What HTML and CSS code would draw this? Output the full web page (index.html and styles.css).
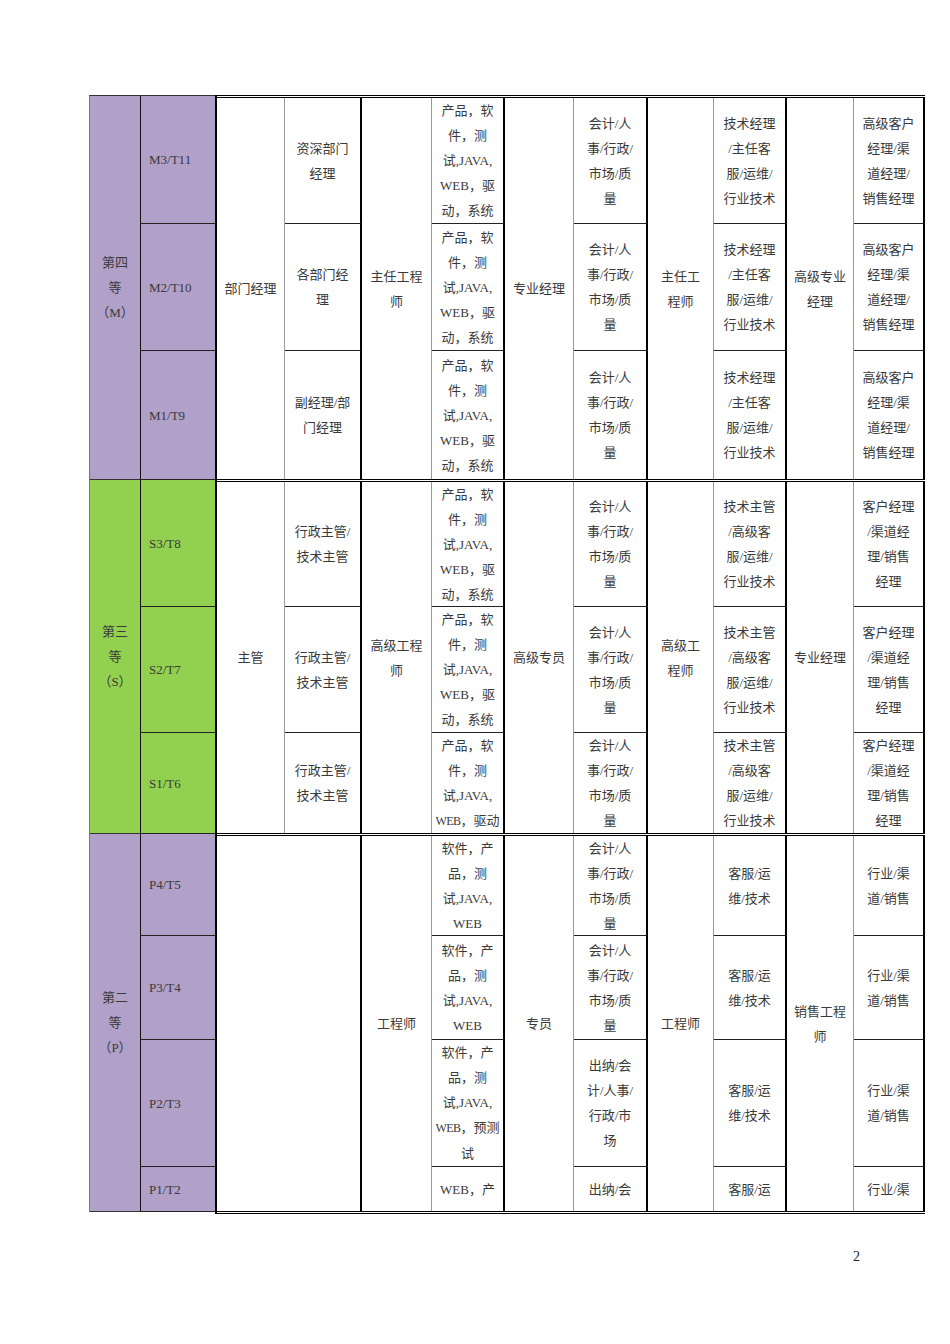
FILE: index.html
```html
<!DOCTYPE html>
<html lang="zh-CN">
<head>
<meta charset="utf-8">
<title>职级表</title>
<link rel="stylesheet" href="styles.css">
</head>
<body>
<div class="page">
  <div class="sheet">
    <div class="left">
      <div class="grade purple gm">第四<br>等<br>（M）</div>
      <div class="lvl purple">M3/T11</div>
      <div class="lvl purple">M2/T10</div>
      <div class="lvl purple">M1/T9</div>
      <div class="grade green gs">第三<br>等<br>（S）</div>
      <div class="lvl green">S3/T8</div>
      <div class="lvl green">S2/T7</div>
      <div class="lvl green">S1/T6</div>
      <div class="grade purple gp">第二<br>等<br>（P）</div>
      <div class="lvl purple">P4/T5</div>
      <div class="lvl purple">P3/T4</div>
      <div class="lvl purple">P2/T3</div>
      <div class="lvl purple">P1/T2</div>
    </div>
    <div class="right">
      <div class="sec sec-m">
        <div class="c span rs3">部门经理</div>
        <div class="c sub">资深部门<br>经理</div>
        <div class="c span rs3">主任工程<br>师</div>
        <div class="c sub">产品，软<br>件，测<br>试,JAVA,<br>WEB，驱<br>动，系统</div>
        <div class="c span rs3">专业经理</div>
        <div class="c sub">会计/人<br>事/行政/<br>市场/质<br>量</div>
        <div class="c span rs3">主任工<br>程师</div>
        <div class="c sub">技术经理<br>/主任客<br>服/运维/<br>行业技术</div>
        <div class="c span rs3">高级专业<br>经理</div>
        <div class="c sub">高级客户<br>经理/渠<br>道经理/<br>销售经理</div>

        <div class="c sub">各部门经<br>理</div>
        <div class="c sub">产品，软<br>件，测<br>试,JAVA,<br>WEB，驱<br>动，系统</div>
        <div class="c sub">会计/人<br>事/行政/<br>市场/质<br>量</div>
        <div class="c sub">技术经理<br>/主任客<br>服/运维/<br>行业技术</div>
        <div class="c sub">高级客户<br>经理/渠<br>道经理/<br>销售经理</div>

        <div class="c sub last">副经理/部<br>门经理</div>
        <div class="c sub last">产品，软<br>件，测<br>试,JAVA,<br>WEB，驱<br>动，系统</div>
        <div class="c sub last">会计/人<br>事/行政/<br>市场/质<br>量</div>
        <div class="c sub last">技术经理<br>/主任客<br>服/运维/<br>行业技术</div>
        <div class="c sub last">高级客户<br>经理/渠<br>道经理/<br>销售经理</div>
      </div>

      <div class="sec sec-s">
        <div class="c span rs3">主管</div>
        <div class="c sub">行政主管/<br>技术主管</div>
        <div class="c span rs3">高级工程<br>师</div>
        <div class="c sub">产品，软<br>件，测<br>试,JAVA,<br>WEB，驱<br>动，系统</div>
        <div class="c span rs3">高级专员</div>
        <div class="c sub">会计/人<br>事/行政/<br>市场/质<br>量</div>
        <div class="c span rs3">高级工<br>程师</div>
        <div class="c sub">技术主管<br>/高级客<br>服/运维/<br>行业技术</div>
        <div class="c span rs3">专业经理</div>
        <div class="c sub">客户经理<br>/渠道经<br>理/销售<br>经理</div>

        <div class="c sub">行政主管/<br>技术主管</div>
        <div class="c sub">产品，软<br>件，测<br>试,JAVA,<br>WEB，驱<br>动，系统</div>
        <div class="c sub">会计/人<br>事/行政/<br>市场/质<br>量</div>
        <div class="c sub">技术主管<br>/高级客<br>服/运维/<br>行业技术</div>
        <div class="c sub">客户经理<br>/渠道经<br>理/销售<br>经理</div>

        <div class="c sub last">行政主管/<br>技术主管</div>
        <div class="c sub last"><div class="t">产品，软<br>件，测<br>试,JAVA,<br><span class="lat">WEB</span>，驱动</div></div>
        <div class="c sub last">会计/人<br>事/行政/<br>市场/质<br>量</div>
        <div class="c sub last">技术主管<br>/高级客<br>服/运维/<br>行业技术</div>
        <div class="c sub last">客户经理<br>/渠道经<br>理/销售<br>经理</div>
      </div>

      <div class="sec sec-p">
        <div class="c merged rs4"></div>
        <div class="c span rs4">工程师</div>
        <div class="c sub">软件，产<br>品，测<br>试,JAVA,<br>WEB</div>
        <div class="c span rs4">专员</div>
        <div class="c sub">会计/人<br>事/行政/<br>市场/质<br>量</div>
        <div class="c span rs4">工程师</div>
        <div class="c sub">客服/运<br>维/技术</div>
        <div class="c span rs4">销售工程<br>师</div>
        <div class="c sub">行业/渠<br>道/销售</div>

        <div class="c sub">软件，产<br>品，测<br>试,JAVA,<br>WEB</div>
        <div class="c sub">会计/人<br>事/行政/<br>市场/质<br>量</div>
        <div class="c sub">客服/运<br>维/技术</div>
        <div class="c sub">行业/渠<br>道/销售</div>

        <div class="c sub"><div class="t">软件，产<br>品，测<br>试,JAVA,<br><span class="lat">WEB</span>，预测<br>试</div></div>
        <div class="c sub">出纳/会<br>计/人事/<br>行政/市<br>场</div>
        <div class="c sub">客服/运<br>维/技术</div>
        <div class="c sub">行业/渠<br>道/销售</div>

        <div class="c sub last">WEB，产</div>
        <div class="c sub last">出纳/会</div>
        <div class="c sub last">客服/运</div>
        <div class="c sub last">行业/渠</div>
      </div>
    </div>
  </div>
  <div class="pagenum">2</div>
</div>
</body>
</html>
```

FILE: styles.css
```css
* { box-sizing: border-box; }

html, body {
  margin: 0;
  padding: 0;
  background: #ffffff;
}

body {
  font-family: "Liberation Serif", "Noto Sans CJK SC", serif;
  font-size: 13px;
  color: #3a3a3a;
}

.page {
  width: 950px;
  height: 1344px;
  padding: 95px 0 0 89px;
}

.sheet {
  display: flex;
  align-items: flex-start;
}

/* left: grade + level columns */
.left {
  width: 126px;
  display: grid;
  grid-template-columns: 51px 74px;
  grid-template-rows: 128px 127px 129px 127px 126px 101px 102px 104px 127px 45px;
  border-top: 1px solid #333;
  border-left: 1px solid #777;
}

.purple { background: #b1a0c7; }
.green { background: #92d050; }

.grade {
  grid-column: 1;
  border-right: 1px solid #111;
  border-bottom: 1px solid #333;
  display: flex;
  align-items: center;
  justify-content: center;
  text-align: center;
  line-height: 25px;
}
.gm, .gs { grid-row: span 3; }
.gp { grid-row: span 4; }

.lvl {
  grid-column: 2;
  border-bottom: 1px solid #222;
  display: flex;
  align-items: center;
  padding-left: 8px;
  line-height: 25px;
}

/* right block */
.right {
  width: 710px;
  border-left: 2px solid #000;
}

.sec {
  display: grid;
  grid-template-columns: 68px 77px 70px 73px 69px 74px 66px 73px 67px 71px;
  border-top: 3px double #000;
}
.sec-m { grid-template-rows: 126px 127px 128px; }
.sec-s { grid-template-rows: 125px 126px 100px; }
.sec-p {
  grid-template-rows: 100px 104px 127px 44px;
  border-bottom: 3px double #000;
}

.c {
  display: flex;
  align-items: center;
  justify-content: center;
  text-align: center;
  line-height: 25px;
  white-space: nowrap;
  overflow: hidden;
}

.t { text-align: center; }

.lat {
  font-size: 12px;
  letter-spacing: -0.5px;
}

.span { border-right: 1px solid #9a9a9a; }
.rs3 { grid-row: span 3; }
.rs4 { grid-row: span 4; }

.merged {
  grid-column: span 2;
  border-right: 2px solid #000;
}

.sub {
  border-right: 2px solid #000;
  border-bottom: 1px solid #222;
}
.sub.last { border-bottom: none; }

.pagenum {
  width: 771px;
  margin-top: 35px;
  text-align: right;
  font-family: "Liberation Serif", serif;
  font-size: 14px;
  line-height: 16px;
  color: #222;
}
```
